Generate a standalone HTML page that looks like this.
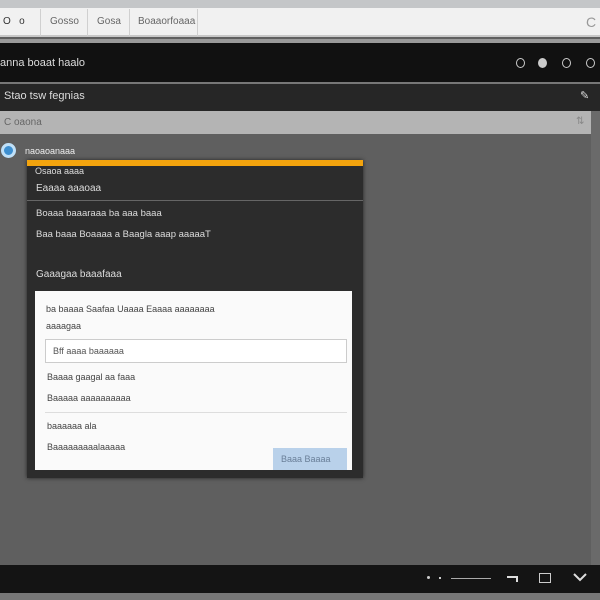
<!DOCTYPE html><html><head><style>
*{margin:0;padding:0;box-sizing:border-box}
body{width:600px;height:600px;overflow:hidden;background:#5f5f5f;font-family:"Liberation Sans",sans-serif;position:relative}
.a{position:absolute}
.t{position:absolute;font-size:10px;white-space:nowrap}
.c{position:absolute;width:9px;height:10px;border:1.5px solid #ccc;border-radius:50%;top:58px}
</style></head><body>
<div class="a" style="left:0;top:0;width:600px;height:8px;background:#c4c6c8"></div>
<div class="a" style="left:0;top:8px;width:600px;height:29px;background:#f1f1f1;border-bottom:2px solid #c8c8c8"></div>
<div class="t" style="left:3px;top:16px;color:#333">O &nbsp;&nbsp;o</div>
<div class="a" style="left:40px;top:9px;width:1px;height:27px;background:#d0d0d0"></div>
<div class="t" style="left:50px;top:16px;color:#666">Gosso</div>
<div class="a" style="left:87px;top:9px;width:1px;height:27px;background:#d0d0d0"></div>
<div class="t" style="left:97px;top:16px;color:#666">Gosa</div>
<div class="a" style="left:129px;top:9px;width:1px;height:27px;background:#d0d0d0"></div>
<div class="t" style="left:138px;top:16px;color:#666">Boaaorfoaaa</div>
<div class="a" style="left:197px;top:9px;width:1px;height:27px;background:#d0d0d0"></div>
<div class="t" style="left:586px;top:14px;color:#999;font-size:14px">C</div>
<div class="a" style="left:0;top:39px;width:600px;height:4px;background:#9a9a9a"></div>
<div class="a" style="left:0;top:43px;width:600px;height:39px;background:#111"></div>
<div class="t" style="left:0;top:57px;color:#ddd;font-size:11px">anna boaat haalo</div>
<div class="c" style="left:516px"></div>
<div class="c" style="left:538px;background:#ccc"></div>
<div class="c" style="left:562px"></div>
<div class="c" style="left:586px"></div>
<div class="a" style="left:0;top:82px;width:600px;height:2px;background:#777"></div>
<div class="a" style="left:0;top:84px;width:600px;height:27px;background:#262626"></div>
<div class="t" style="left:4px;top:90px;color:#ddd;font-size:11px">Stao tsw fegnias</div>
<div class="t" style="left:580px;top:89px;color:#ddd;font-size:11px">✎</div>
<div class="a" style="left:0;top:111px;width:591px;height:23px;background:#b4b4b4"></div>
<div class="t" style="left:4px;top:117px;color:#666">C oaona</div>
<div class="t" style="left:576px;top:116px;color:#888">⇅</div>
<div class="a" style="left:591px;top:111px;width:9px;height:455px;background:#6a6a6a"></div>
<div class="a" style="left:1px;top:143px;width:15px;height:15px;border-radius:50%;background:#3d8fd0;border:3px solid #bfe0f8"></div>
<div class="t" style="left:25px;top:146px;color:#eee;font-size:9px">naoaoanaaa</div>
<div class="a" style="left:27px;top:160px;width:336px;height:318px;background:#2c2c2c;box-shadow:0 0 4px #222"></div>
<div class="a" style="left:27px;top:160px;width:336px;height:6px;background:#f3a40e"></div>
<div class="t" style="left:35px;top:166px;color:#ddd;font-size:9px">Osaoa aaaa</div>
<div class="t" style="left:36px;top:183px;color:#ddd">Eaaaa aaaoaa</div>
<div class="a" style="left:27px;top:200px;width:336px;height:1px;background:#666"></div>
<div class="t" style="left:36px;top:208px;color:#ddd;font-size:9.5px">Boaaa baaaraaa ba aaa baaa</div>
<div class="t" style="left:36px;top:229px;color:#ddd;font-size:9.5px">Baa baaa Boaaaa a Baagla aaap aaaaaT</div>
<div class="t" style="left:36px;top:269px;color:#ddd">Gaaagaa baaafaaa</div>
<div class="a" style="left:35px;top:291px;width:317px;height:179px;background:#fafafa"></div>
<div class="t" style="left:46px;top:304px;color:#444;font-size:9px">ba baaaa Saafaa Uaaaa Eaaaa aaaaaaaa</div>
<div class="t" style="left:46px;top:321px;color:#444;font-size:9px">aaaagaa</div>
<div class="a" style="left:45px;top:339px;width:302px;height:24px;border:1px solid #ccc;background:#fff"></div>
<div class="t" style="left:53px;top:346px;color:#555;font-size:9px">Bff aaaa baaaaaa</div>
<div class="t" style="left:47px;top:372px;color:#444;font-size:9px">Baaaa gaagal aa faaa</div>
<div class="t" style="left:47px;top:393px;color:#444;font-size:9px">Baaaaa aaaaaaaaaa</div>
<div class="a" style="left:45px;top:412px;width:302px;height:1px;background:#ddd"></div>
<div class="t" style="left:47px;top:421px;color:#444;font-size:9px">baaaaaa ala</div>
<div class="t" style="left:47px;top:442px;color:#444;font-size:9px">Baaaaaaaaalaaaaa</div>
<div class="a" style="left:273px;top:448px;width:74px;height:22px;background:#b9d1ea"></div>
<div class="t" style="left:281px;top:454px;color:#6a7f98;font-size:9px">Baaa Baaaa</div>
<div class="a" style="left:0;top:565px;width:600px;height:28px;background:#141414"></div>
<div class="a" style="left:0;top:593px;width:600px;height:7px;background:#777"></div>
<div class="a" style="left:427px;top:576px;width:3px;height:3px;border-radius:50%;background:#ccc"></div>
<div class="a" style="left:439px;top:577px;width:2px;height:2px;background:#ccc"></div>
<div class="a" style="left:451px;top:578px;width:40px;height:1px;background:#aaa"></div>
<div class="a" style="left:507px;top:576px;width:10px;height:2px;background:#ddd"></div>
<div class="a" style="left:516px;top:576px;width:2px;height:6px;background:#ddd"></div>
<div class="a" style="left:539px;top:573px;width:12px;height:10px;border:1.5px solid #ccc"></div>
<svg class="a" style="left:573px;top:572px" width="14" height="10"><path d="M1 2L7 8L13 2" stroke="#ddd" stroke-width="2" fill="none"/></svg>
</body></html>
